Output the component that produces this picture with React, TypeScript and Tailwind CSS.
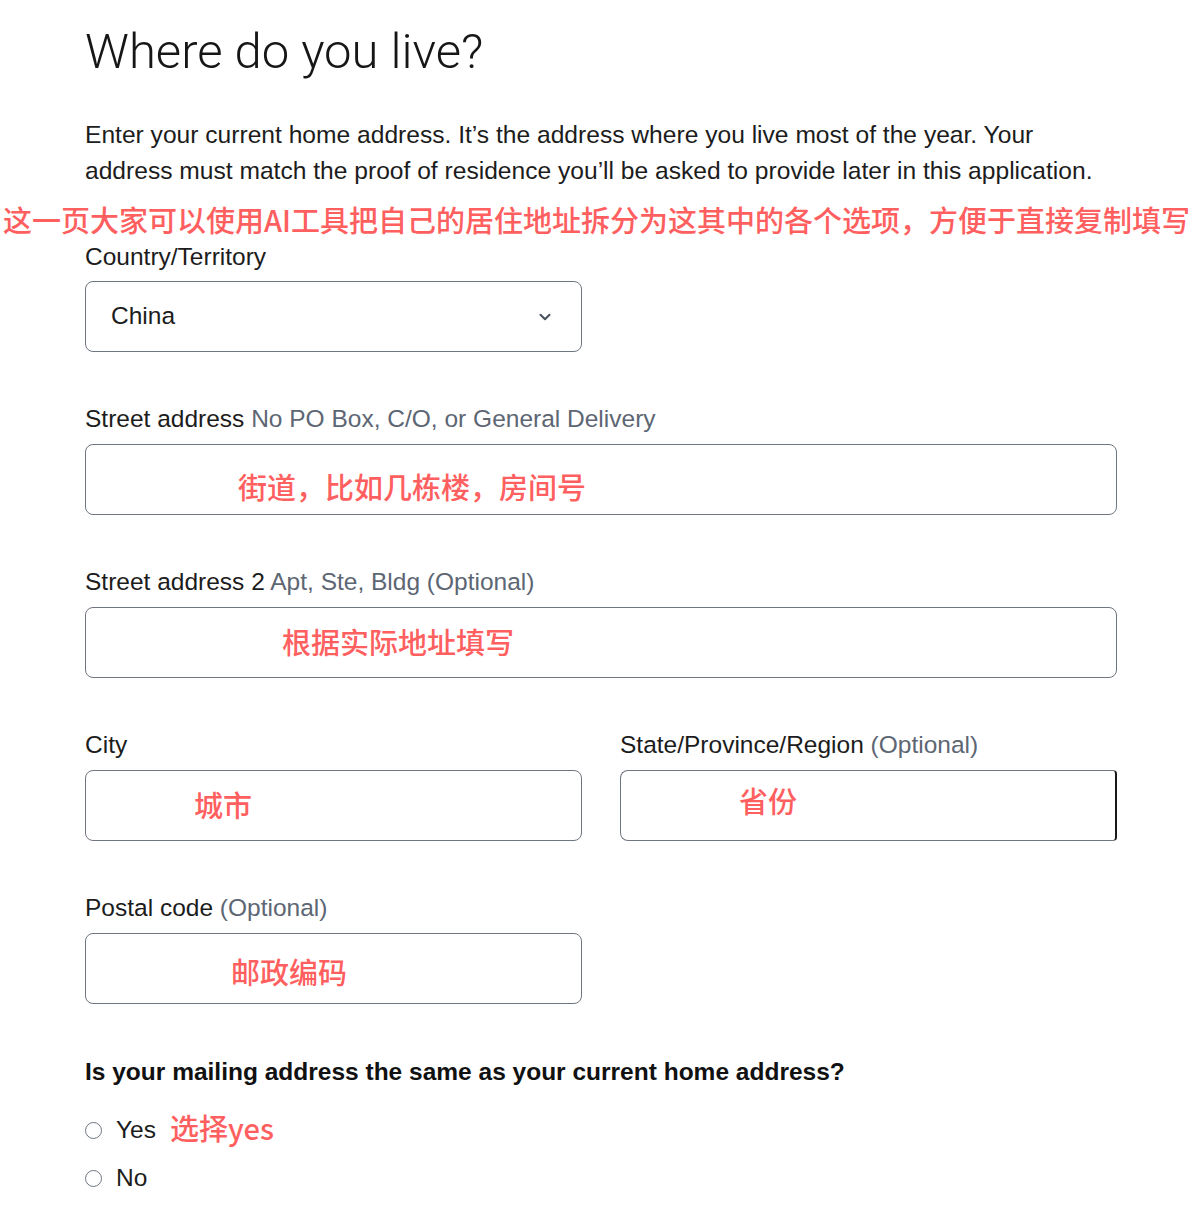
import { ChevronDown } from 'lucide-react';

const red = 'text-[#ff5f5f]';

function Label({ main, hint }: { main: string; hint?: string }) {
  return (
    <div className="h-[26px] leading-[26px] text-[24.5px] text-[#1c1c1c] whitespace-nowrap">
      {main}
      {hint && <span className="text-[#5d6673]"> {hint}</span>}
    </div>
  );
}

function Box({ className, children }: { className?: string; children?: React.ReactNode }) {
  return (
    <div
      className={
        'mt-[12px] h-[71px] rounded-[8px] border-[1.5px] border-[#6f7680] bg-white flex items-center ' +
        (className ?? '')
      }
    >
      {children}
    </div>
  );
}

function Note({ children }: { children: React.ReactNode }) {
  return (
    <span
      className={`${red} text-[29px] leading-none whitespace-nowrap font-medium`}
      style={{ fontFamily: '"Noto Sans CJK SC", "Liberation Sans", sans-serif' }}
    >
      {children}
    </span>
  );
}

export default function App() {
  return (
    <div
      className="w-[1196px] min-h-[1212px] bg-white pt-[24px] overflow-hidden"
      style={{ fontFamily: '"Liberation Sans", Arial, sans-serif' }}
    >
      {/* Heading */}
      <div className="pl-[85px]">
        <h1
          className="h-[56px] leading-[56px] text-[49px] font-light text-[#161616]"
          style={{ fontFamily: 'Roboto, "Liberation Sans", sans-serif' }}
        >
          Where do you live?
        </h1>
        <p className="mt-[37px] whitespace-nowrap text-[24.6px] leading-[36px] text-[#1c1c1c]">
          Enter your current home address. It’s the address where you live most of the year. Your
          <br />
          address must match the proof of residence you’ll be asked to provide later in this application.
        </p>
      </div>

      {/* Annotation across the page */}
      <div
        className={`mt-[12px] pl-[3px] h-[36px] leading-[36px] text-[29px] font-medium ${red} whitespace-nowrap`}
        style={{ fontFamily: '"Noto Sans CJK SC", "Liberation Sans", sans-serif' }}
      >
        这一页大家可以使用AI工具把自己的居住地址拆分为这其中的各个选项，方便于直接复制填写
      </div>

      <div className="pl-[85px] mt-[7px]">
        {/* Country */}
        <Label main="Country/Territory" />
        <Box className="!mt-[11px] w-[497px] pl-[25px] pr-[27px] justify-between">
          <span className="text-[24.5px] text-[#1c1c1c]">China</span>
          <ChevronDown size={18} strokeWidth={2.8} className="text-[#4b5360]" />
        </Box>

        {/* Street address */}
        <div className="mt-[54px]">
          <Label main="Street address" hint="No PO Box, C/O, or General Delivery" />
          <Box className="w-[1032px] pl-[152px] pt-[14px]">
            <Note>街道，比如几栋楼，房间号</Note>
          </Box>
        </div>

        {/* Street address 2 */}
        <div className="mt-[54px]">
          <Label main="Street address 2" hint="Apt, Ste, Bldg (Optional)" />
          <Box className="w-[1032px] pl-[196px] pb-[3px]">
            <Note>根据实际地址填写</Note>
          </Box>
        </div>

        {/* City / State */}
        <div className="mt-[54px] flex gap-[38px]">
          <div>
            <Label main="City" />
            <Box className="w-[497px] pl-[108px] pb-[3px]">
              <Note>城市</Note>
            </Box>
          </div>
          <div>
            <Label main="State/Province/Region" hint="(Optional)" />
            <Box className="w-[497px] pl-[118px] pb-[10px] border-r-[2px] border-r-[#1a1a1a] rounded-r-[4px]">
              <Note>省份</Note>
            </Box>
          </div>
        </div>

        {/* Postal code */}
        <div className="mt-[54px]">
          <Label main="Postal code" hint="(Optional)" />
          <Box className="w-[497px] pl-[145px] pt-[5px]">
            <Note>邮政编码</Note>
          </Box>
        </div>

        {/* Mailing address question */}
        <div className="mt-[55px] h-[26px] leading-[26px] text-[24.5px] font-bold text-[#111] whitespace-nowrap">
          Is your mailing address the same as your current home address?
        </div>

        <div className="mt-[29px] flex flex-col gap-[16px]">
          <label className="h-[32px] flex items-center">
            <span className="w-[17px] h-[17px] rounded-full border-[1.5px] border-[#6f7680] bg-white" />
            <span className="ml-[14px] text-[24.5px] text-[#1c1c1c]">Yes</span>
            <span className="ml-[14px]">
              <Note>选择yes</Note>
            </span>
          </label>
          <label className="h-[32px] flex items-center">
            <span className="w-[17px] h-[17px] rounded-full border-[1.5px] border-[#6f7680] bg-white" />
            <span className="ml-[14px] text-[24.5px] text-[#1c1c1c]">No</span>
          </label>
        </div>
      </div>
    </div>
  );
}
